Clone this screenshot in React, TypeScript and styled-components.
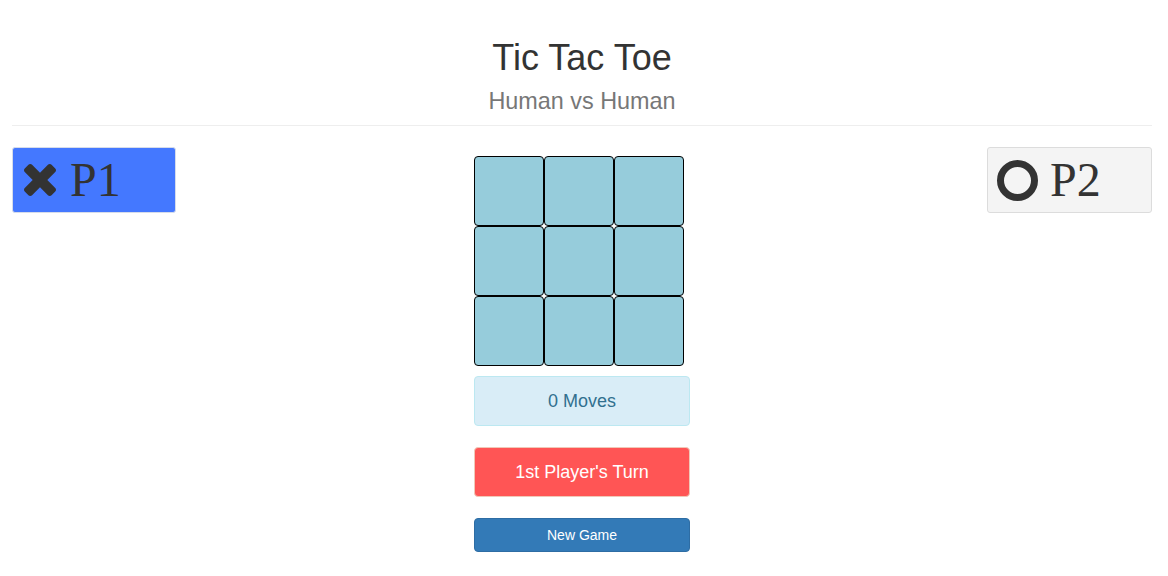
import React from "react";
import styled, { createGlobalStyle } from "styled-components";

const GlobalStyle = createGlobalStyle`
  html, body {
    margin: 0;
    padding: 0;
    background: #fff;
  }
  body {
    font-family: "Liberation Sans", Arial, Helvetica, sans-serif;
    color: #333;
    font-size: 14px;
  }
  * { box-sizing: border-box; }
`;

const Page = styled.div`
  padding: 0 16px 0 12px;
`;

const Header = styled.header`
  text-align: center;
  padding: 38px 0 10px;
  border-bottom: 1px solid #eee;
`;

const Title = styled.h1`
  margin: 0;
  font-size: 36px;
  line-height: 40px;
  font-weight: 500;
  color: #333;
`;

const Subtitle = styled.div`
  margin-top: 9px;
  font-size: 23.4px;
  line-height: 28px;
  color: #777;
`;

const Board = styled.main`
  margin-top: 21px;
  display: grid;
  grid-template-columns: 1fr 216px 1fr;
  align-items: start;
`;

const PlayerCard = styled.div<{ $active?: boolean; $side: "left" | "right" }>`
  justify-self: ${(p) => (p.$side === "left" ? "start" : "end")};
  width: ${(p) => (p.$side === "left" ? "164px" : "165px")};
  height: 66px;
  display: flex;
  align-items: center;
  gap: ${(p) => (p.$side === "left" ? "14px" : "12px")};
  padding: 0 ${(p) => (p.$side === "left" ? "11px" : "9px")};
  border: 1px solid ${(p) => (p.$active ? "#d6dcea" : "#dcdcdc")};
  border-radius: 3px;
  background: ${(p) => (p.$active ? "#4478ff" : "#f4f4f4")};
`;

const PlayerName = styled.span`
  font-family: "Liberation Serif", "Times New Roman", serif;
  font-size: 48px;
  line-height: 48px;
  color: #333;
`;

const Center = styled.div`
  margin-top: 9px;
  display: flex;
  flex-direction: column;
  align-items: stretch;
`;

const Grid = styled.div`
  display: grid;
  grid-template-columns: repeat(3, 70px);
  grid-auto-rows: 70px;
  width: 210px;
`;

const Cell = styled.button`
  border: 1px solid #000;
  border-radius: 4px;
  background: #96ccdb;
  padding: 0;
  margin: 0;
  cursor: pointer;
`;

const Banner = styled.div<{ $tone: "info" | "turn" }>`
  margin-top: ${(p) => (p.$tone === "info" ? "10px" : "21px")};
  padding: 14px;
  line-height: 20px;
  font-size: 18px;
  text-align: center;
  border-radius: 4px;
  border: 1px solid ${(p) => (p.$tone === "info" ? "#bce8f1" : "#f0c8b8")};
  background: ${(p) => (p.$tone === "info" ? "#d9edf7" : "#ff5555")};
  color: ${(p) => (p.$tone === "info" ? "#31708f" : "#fff")};
`;

const NewGameButton = styled.button`
  margin-top: 21px;
  height: 34px;
  padding: 6px 12px;
  font-family: "Liberation Sans", Arial, sans-serif;
  font-size: 14px;
  line-height: 20px;
  color: #fff;
  background: #337ab7;
  border: 1px solid #2e6da4;
  border-radius: 4px;
  cursor: pointer;
`;

const CrossIcon = () => (
  <svg width="32" height="32" viewBox="110 366 1188 1188" aria-hidden="true">
    <path
      fill="#333"
      d="M1298 1322q0 40-28 68l-136 136q-28 28-68 28t-68-28l-294-294-294 294q-28 28-68 28t-68-28l-136-136q-28-28-28-68t28-68l294-294-294-294q-28-28-28-68t28-68l136-136q28-28 68-28t68 28l294 294 294-294q28-28 68-28t68 28l136 136q28 28 28 68t-28 68l-294 294 294 294q28 28 28 68z"
    />
  </svg>
);

const RingIcon = () => (
  <svg width="41" height="41" viewBox="0 0 41 41" aria-hidden="true">
    <circle cx="20.5" cy="20.5" r="17" fill="none" stroke="#333" strokeWidth="7" />
  </svg>
);

export default function App() {
  const cells = Array.from({ length: 9 }, (_, i) => i);
  return (
    <>
      <GlobalStyle />
      <Page>
        <Header>
          <Title>Tic Tac Toe</Title>
          <Subtitle>Human vs Human</Subtitle>
        </Header>
        <Board>
          <PlayerCard $side="left" $active>
            <CrossIcon />
            <PlayerName>P1</PlayerName>
          </PlayerCard>
          <Center>
            <Grid>
              {cells.map((i) => (
                <Cell key={i} aria-label={`cell ${i + 1}`} />
              ))}
            </Grid>
            <Banner $tone="info">0 Moves</Banner>
            <Banner $tone="turn">1st Player's Turn</Banner>
            <NewGameButton>New Game</NewGameButton>
          </Center>
          <PlayerCard $side="right">
            <RingIcon />
            <PlayerName>P2</PlayerName>
          </PlayerCard>
        </Board>
      </Page>
    </>
  );
}
